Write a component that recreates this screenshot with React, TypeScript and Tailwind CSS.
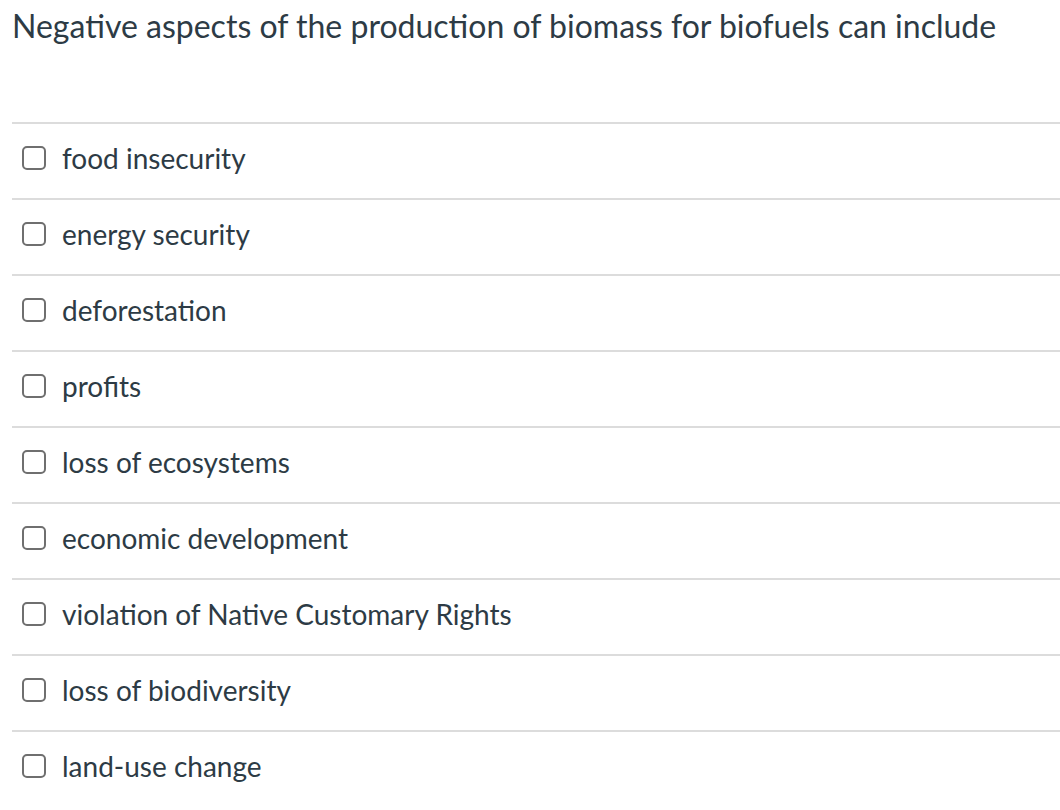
const options = [
  "food insecurity",
  "energy security",
  "deforestation",
  "profits",
  "loss of ecosystems",
  "economic development",
  "violation of Native Customary Rights",
  "loss of biodiversity",
  "land-use change",
];

export default function App() {
  return (
    <div className="w-[1060px] h-[810px] overflow-hidden bg-white text-[#2d3b45] font-['Lato',sans-serif]">
      <h1 className="pl-3 pt-[6px] text-[32px] leading-[40px] font-normal">
        Negative aspects of the production of biomass for biofuels can include
      </h1>
      <ul className="ml-3 mt-[76px]">
        {options.map((o) => (
          <li key={o} className="h-[76px] border-t-2 border-[#dcdcdc] flex items-center pl-[10px] pb-[6px]">
            <span className="w-[24px] h-[24px] border-2 border-[#6f6f6f] rounded-[5px] shrink-0" />
            <span className="ml-[16px] text-[28px] leading-none">{o}</span>
          </li>
        ))}
      </ul>
    </div>
  );
}
